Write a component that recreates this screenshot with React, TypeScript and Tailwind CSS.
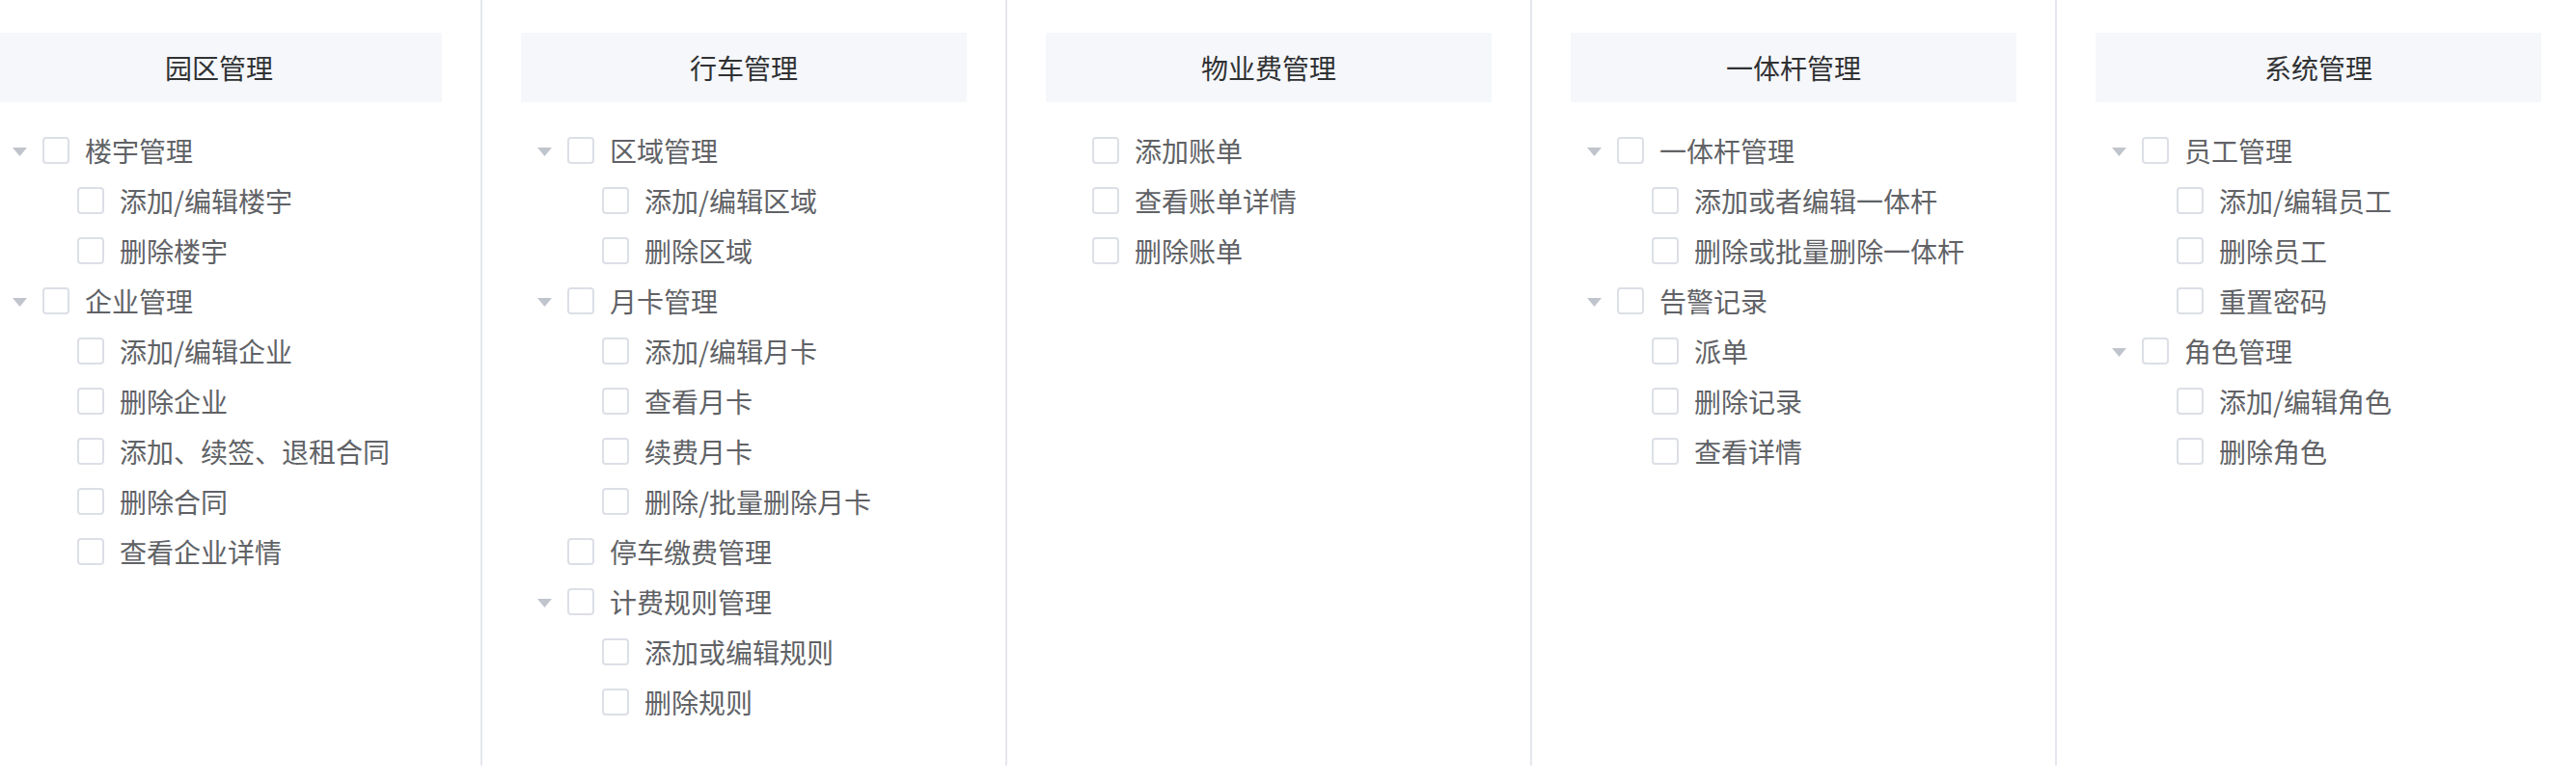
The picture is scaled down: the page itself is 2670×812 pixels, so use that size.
import React from "react";

type Node = { label: string; children?: Node[] };
type Group = { title: string; nodes: Node[] };

const groups: Group[] = [
  {
    title: "园区管理",
    nodes: [
      { label: "楼宇管理", children: [{ label: "添加/编辑楼宇" }, { label: "删除楼宇" }] },
      {
        label: "企业管理",
        children: [
          { label: "添加/编辑企业" },
          { label: "删除企业" },
          { label: "添加、续签、退租合同" },
          { label: "删除合同" },
          { label: "查看企业详情" },
        ],
      },
    ],
  },
  {
    title: "行车管理",
    nodes: [
      { label: "区域管理", children: [{ label: "添加/编辑区域" }, { label: "删除区域" }] },
      {
        label: "月卡管理",
        children: [
          { label: "添加/编辑月卡" },
          { label: "查看月卡" },
          { label: "续费月卡" },
          { label: "删除/批量删除月卡" },
        ],
      },
      { label: "停车缴费管理" },
      { label: "计费规则管理", children: [{ label: "添加或编辑规则" }, { label: "删除规则" }] },
    ],
  },
  {
    title: "物业费管理",
    nodes: [{ label: "添加账单" }, { label: "查看账单详情" }, { label: "删除账单" }],
  },
  {
    title: "一体杆管理",
    nodes: [
      { label: "一体杆管理", children: [{ label: "添加或者编辑一体杆" }, { label: "删除或批量删除一体杆" }] },
      { label: "告警记录", children: [{ label: "派单" }, { label: "删除记录" }, { label: "查看详情" }] },
    ],
  },
  {
    title: "系统管理",
    nodes: [
      { label: "员工管理", children: [{ label: "添加/编辑员工" }, { label: "删除员工" }, { label: "重置密码" }] },
      { label: "角色管理", children: [{ label: "添加/编辑角色" }, { label: "删除角色" }] },
    ],
  },
];

function Caret({ show }: { show: boolean }) {
  return (
    <span className="flex h-[52px] w-[48px] shrink-0 items-center justify-center">
      {show && (
        <svg width="15" height="9" viewBox="0 0 15 9" className="mt-[2px]">
          <path d="M0 0 L15 0 L7.5 9 Z" fill="#c0c4cc" />
        </svg>
      )}
    </span>
  );
}

function Row({ label, level, hasChildren }: { label: string; level: number; hasChildren: boolean }) {
  return (
    <div className={`flex h-[52px] items-center ${level === 2 ? "pl-[36px]" : ""}`}>
      <Caret show={hasChildren} />
      <span className="box-border h-[28px] w-[28px] shrink-0 rounded-[4px] border-2 border-[#dcdfe6] bg-white" />
      <span className="ml-[16px] whitespace-nowrap text-[28px] leading-[52px] text-[#606266]">{label}</span>
    </div>
  );
}

function Column({ group }: { group: Group }) {
  return (
    <div className="box-border w-[544px] shrink-0 border-r-2 border-[#e4e7ed] px-[40px] pb-[40px] pt-[34px]">
      <div className="flex h-[72px] items-center justify-center bg-[#f5f7fa] text-[28px] text-[#303133]">
        {group.title}
      </div>
      <div className="mt-[24px]">
        {group.nodes.map((n) => (
          <React.Fragment key={n.label}>
            <Row label={n.label} level={1} hasChildren={!!n.children} />
            {n.children?.map((c) => (
              <Row key={c.label} label={c.label} level={2} hasChildren={false} />
            ))}
          </React.Fragment>
        ))}
      </div>
    </div>
  );
}

export default function App() {
  return (
    <div
      className="h-[812px] w-[2670px] overflow-hidden bg-white"
      style={{ fontFamily: '"Noto Sans CJK SC", "Noto Sans", sans-serif' }}
    >
      <div className="ml-[-44px] flex items-stretch">
        {groups.map((g) => (
          <Column key={g.title} group={g} />
        ))}
      </div>
    </div>
  );
}
